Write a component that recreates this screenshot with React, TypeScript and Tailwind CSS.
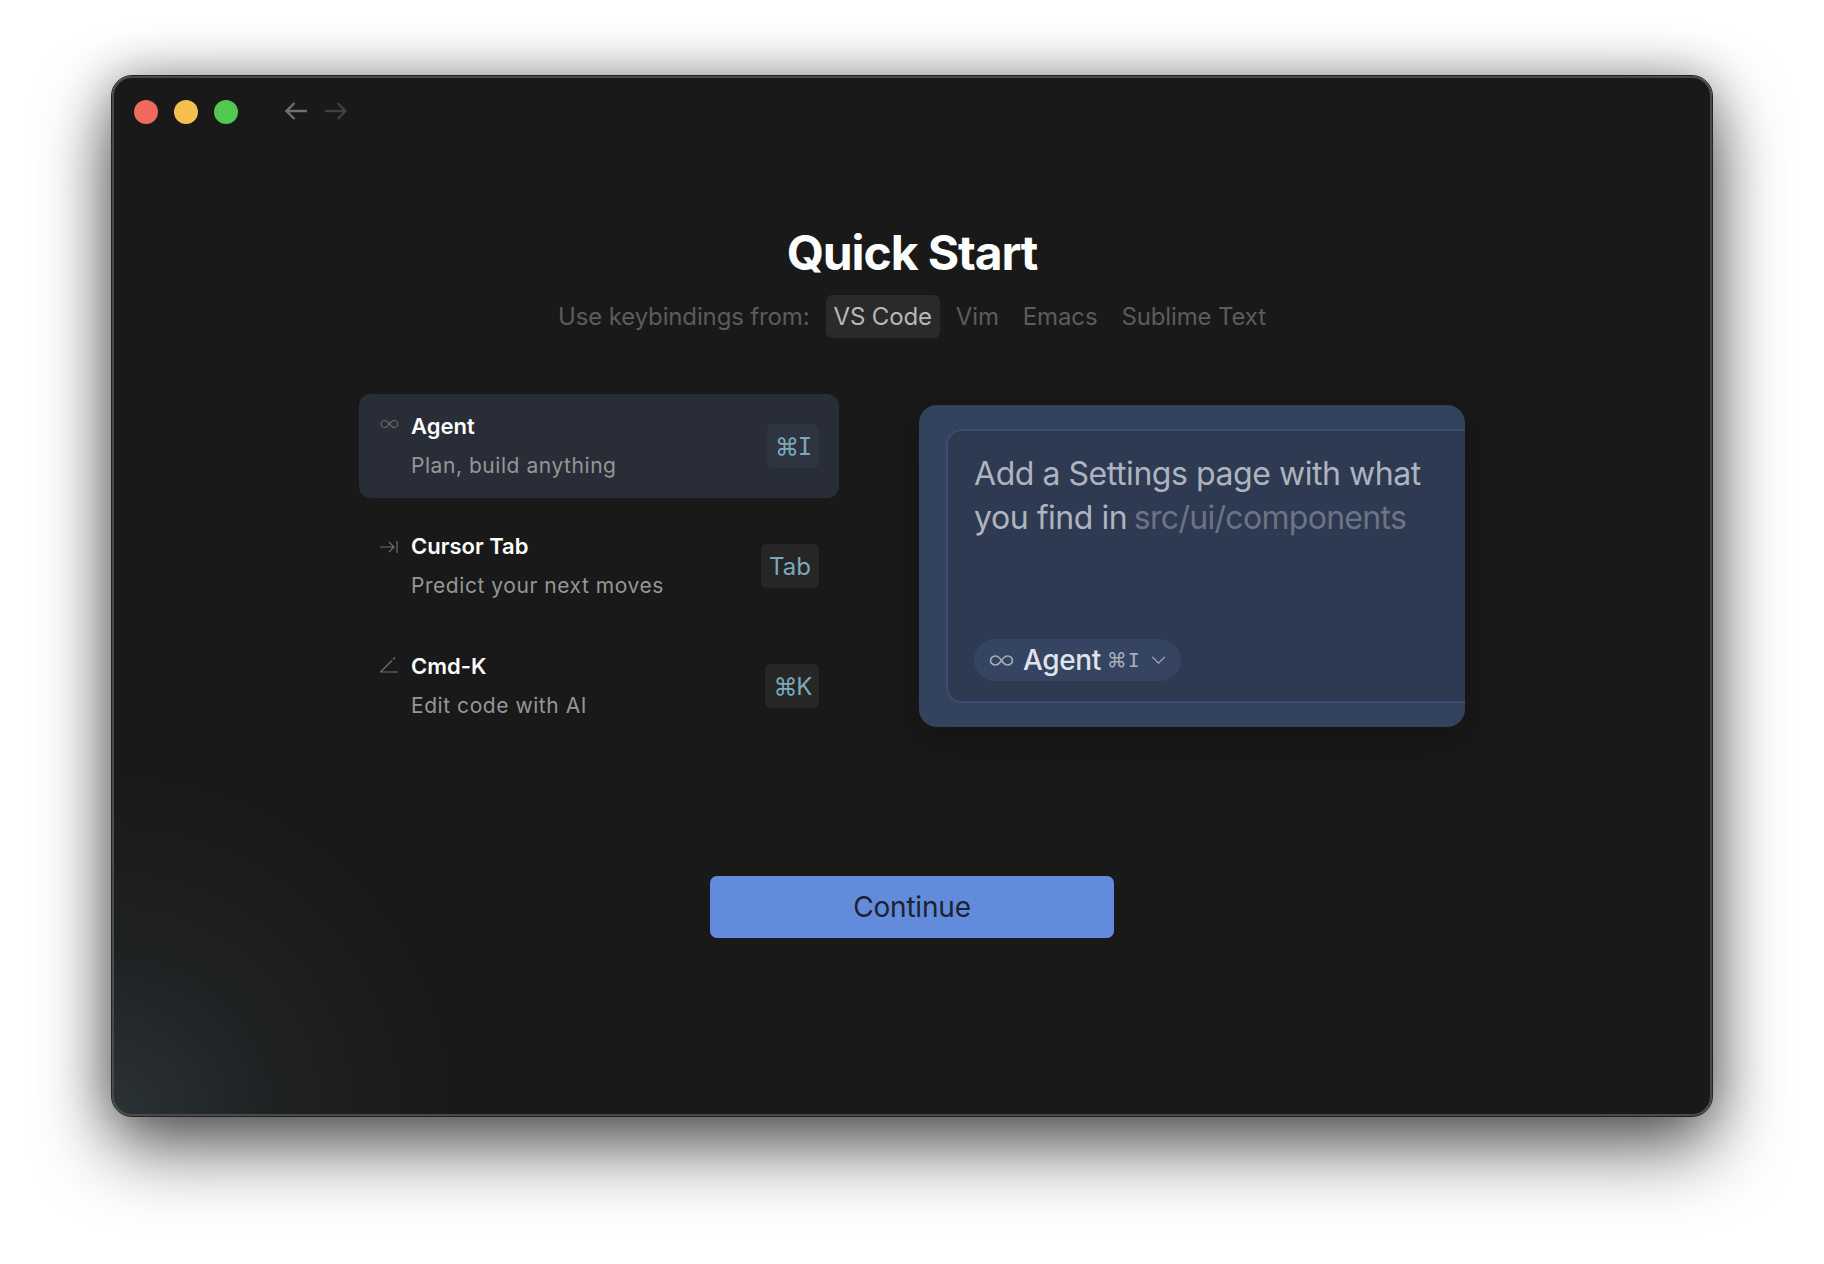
import React from "react";

const Inf = ({ className = "", sw = 1.1 }: { className?: string; sw?: number }) => (
  <svg viewBox="0 0 20 10" fill="none" stroke="currentColor" strokeWidth={sw} className={className}>
    <path d="M10 5C8.6 2.9 7.2 1.4 5 1.4 3 1.4 1.2 3 1.2 5S3 8.6 5 8.6c2.2 0 3.6-1.5 5-3.6 1.4-2.1 2.8-3.6 5-3.6 2 0 3.8 1.6 3.8 3.6S17 8.6 15 8.6c-2.2 0-3.6-1.5-5-3.6Z" />
  </svg>
);
const TabIcon = () => (
  <svg viewBox="0 0 18 14" fill="none" stroke="currentColor" strokeWidth="1.2" className="w-[18px] h-[14px]">
    <path d="M0 7h14M9 2l5 5-5 5M17 1v12" />
  </svg>
);
const EditIcon = () => (
  <svg viewBox="0 0 18 16" fill="none" stroke="currentColor" strokeWidth="1.2" className="w-[18px] h-[16px]">
    <path d="M0 15h18M0.5 15 12 3.5M13 2.5 15 0.5" />
  </svg>
);

const rows = [
  { title: "Agent", desc: "Plan, build anything", key: <><span>⌘</span><span className="font-['DejaVu_Sans_Mono',monospace]">I</span></>, icon: <Inf className="w-[19px] h-[10px]" />, iconPad: "pt-[3px]", active: true },
  { title: "Cursor Tab", desc: "Predict your next moves", key: "Tab", icon: <TabIcon />, iconPad: "pt-[4px]", active: false },
  { title: "Cmd-K", desc: "Edit code with AI", key: "⌘K", icon: <EditIcon />, iconPad: "pt-[1px]", active: false },
];

export default function App() {
  return (
    <div className="w-[1824px] h-[1264px] bg-white pt-[76px] pl-[112px] overflow-hidden font-['Inter',sans-serif]">
      <div className="w-[1600px] h-[1040px] rounded-[20px] border-2 border-[#4a4a4a] outline outline-1 outline-[#222222] shadow-[0_32px_75px_rgba(0,0,0,0.62),0_0_50px_rgba(0,0,0,0.32)] bg-[#191919] bg-[radial-gradient(circle_at_0%_100%,#2b3235_0,#1f2223_160px,#191919_340px),radial-gradient(circle_at_34%_52%,#1f1f1f_0,#191919_320px)] flex flex-col items-center overflow-hidden">
        <div className="w-full flex items-center pl-[20px] pt-[19px] h-[48px]">
          <div className="flex gap-[16px]">
            <div className="w-[24px] h-[24px] rounded-full bg-[#ee6a5f]" />
            <div className="w-[24px] h-[24px] rounded-full bg-[#f4bf4f]" />
            <div className="w-[24px] h-[24px] rounded-full bg-[#51c94f]" />
          </div>
          <div className="flex gap-[18px] ml-[47px] pb-[2px]">
            <svg viewBox="0 0 22 18" fill="none" stroke="#6f6f6f" strokeWidth="2.4" className="w-[22px] h-[18px]"><path d="M22 9H1.8M9.5 1 1.5 9l8 8" /></svg>
            <svg viewBox="0 0 22 18" fill="none" stroke="#3f3f3f" strokeWidth="2.4" className="w-[22px] h-[18px]"><path d="M0 9h20.2M12.5 1l8 8-8 8" /></svg>
          </div>
        </div>

        <h1 className="mt-[98px] text-[48px] leading-[58px] font-[750] tracking-[-1.1px] text-white">Quick Start</h1>

        <div className="mt-[13px] flex items-center text-[24px] tracking-[-0.14px] text-[#5c5c5c]">
          <span className="mr-[16px]">Use keybindings from:</span>
          <span className="h-[43px] flex items-center px-[8px] rounded-[6px] bg-[#2a2a2a] text-[#b8b8b8]">VS Code</span>
          <span className="ml-[16px]">Vim</span>
          <span className="ml-[24px]">Emacs</span>
          <span className="ml-[24px]">Sublime Text</span>
        </div>

        <div className="mt-[56px] w-full flex items-start pl-[245px]">
          <div className="w-[480px] flex flex-col gap-[16px]">
            {rows.map((r) => (
              <div key={r.title} className={`h-[104px] rounded-[12px] flex items-center pl-[20px] pr-[20px] ${r.active ? "bg-[#282d38]" : ""}`}>
                <div className="w-[32px] self-start pt-[22px] pl-[1px] text-[#707070] flex">
                  <div className={r.iconPad}>{r.icon}</div>
                </div>
                <div className="flex-1 pb-[1px]">
                  <div className="text-[22px] leading-[32px] font-semibold text-white">{r.title}</div>
                  <div className="mt-[9px] text-[21px] leading-[30px] tracking-[0.55px] text-[#969696]">{r.desc}</div>
                </div>
                <div className={`h-[44px] px-[8px] pt-[2px] rounded-[6px] flex items-center text-[24px] text-[#7ba8ba] ${r.active ? "bg-[#2f3540]" : "bg-[#262626]"} ${r.key === "Tab" ? "" : "tracking-[-1.3px]"}`}>{r.key}</div>
              </div>
            ))}
          </div>

          <div className="ml-[80px] mt-[11px] w-[546px] h-[322px] rounded-[18px] bg-[#33435d] pt-[24px] pl-[27px] overflow-hidden shadow-[0_12px_40px_rgba(0,0,0,0.25)]">
            <div className="h-[274px] rounded-l-[16px] border-2 border-r-0 border-[#3a4f70] bg-[#2e3a52] pl-[26px] pt-[21px] flex flex-col justify-between pb-[20px]">
              <p className="w-[480px] text-[32px] leading-[44px] tracking-[-0.45px] text-[#adb3bf]">
                Add a Settings page with what you find in <span className="-ml-[2px] tracking-[-0.7px] text-[#6b7483]">src/ui/components</span>
              </p>
              <div className="self-start h-[42px] rounded-full bg-[#354460] flex items-center pl-[15px] pr-[15px]">
                <Inf className="w-[25px] h-[13px] text-[#a5acb9]" sw={1.3} />
                <span className="ml-[9px] text-[28px] font-medium tracking-[-0.4px] text-[#e0e3ea]">Agent</span>
                <span className="ml-[6px] text-[20px] text-[#a5acb9] flex items-center gap-[1px]"><span>⌘</span><span className="font-['DejaVu_Sans_Mono',monospace]">I</span></span>
                <svg viewBox="0 0 16 10" fill="none" stroke="#a5acb9" strokeWidth="1.3" className="ml-[11px] w-[15px] h-[9px]"><path d="M1 1l7 7 7-7" /></svg>
              </div>
            </div>
          </div>
        </div>

        <button className="mt-[138px] w-[404px] h-[62px] rounded-[7px] bg-[#638bdc] text-[28px] tracking-[-0.2px] text-[#1b2230] flex items-center justify-center">Continue</button>
      </div>
    </div>
  );
}
